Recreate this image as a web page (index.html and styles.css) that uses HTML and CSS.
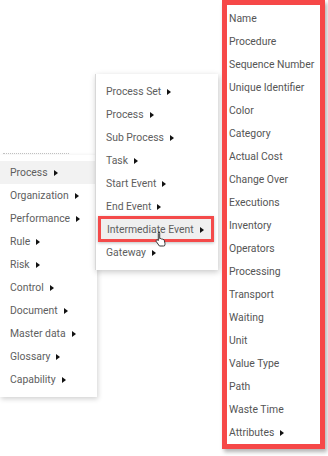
FILE: index.html
```html
<!DOCTYPE html>
<html>
<head>
<meta charset="utf-8">
<link rel="stylesheet" href="styles.css">
</head>
<body>
<div class="canvas">
  <div class="ghost-line"></div>

  <ul class="menu menu-left">
    <li class="item active">Process<span class="arr"></span></li>
    <li class="item">Organization<span class="arr"></span></li>
    <li class="item">Performance<span class="arr"></span></li>
    <li class="item">Rule<span class="arr"></span></li>
    <li class="item">Risk<span class="arr"></span></li>
    <li class="item">Control<span class="arr"></span></li>
    <li class="item">Document<span class="arr"></span></li>
    <li class="item">Master data<span class="arr"></span></li>
    <li class="item">Glossary<span class="arr"></span></li>
    <li class="item">Capability<span class="arr"></span></li>
  </ul>

  <ul class="menu menu-mid">
    <li class="item">Process Set<span class="arr"></span></li>
    <li class="item">Process<span class="arr"></span></li>
    <li class="item">Sub Process<span class="arr"></span></li>
    <li class="item">Task<span class="arr"></span></li>
    <li class="item">Start Event<span class="arr"></span></li>
    <li class="item">End Event<span class="arr"></span></li>
    <li class="item hover">Intermediate Event<span class="arr"></span></li>
    <li class="item">Gateway<span class="arr"></span></li>
  </ul>

  <svg class="cursor" width="12" height="16" viewBox="0 0 12 16">
    <path d="M3.5 1.2c.7 0 1.2.5 1.2 1.2v5.2l.3-.1c.6-.3 1.300 0 1.5.5.6-.3 1.3 0 1.5.6.6-.2 1.3.1 1.4.8l.6 3.3c.1.8-.1 1.6-.6 2.2L8.6 15H4.4L1.3 10.6c-.4-.6-.3-1.3.3-1.600.5-.3 1.1-.1 1.500.3l.2.3V2.4c0-.7.5-1.2 1.2-1.2z" fill="#fff" stroke="#222" stroke-width="0.9"/>
  </svg>

  <ul class="menu menu-right">
    <li class="item">Name</li>
    <li class="item">Procedure</li>
    <li class="item">Sequence Number</li>
    <li class="item">Unique Identifier</li>
    <li class="item">Color</li>
    <li class="item">Category</li>
    <li class="item">Actual Cost</li>
    <li class="item">Change Over</li>
    <li class="item">Executions</li>
    <li class="item">Inventory</li>
    <li class="item">Operators</li>
    <li class="item">Processing</li>
    <li class="item">Transport</li>
    <li class="item">Waiting</li>
    <li class="item">Unit</li>
    <li class="item">Value Type</li>
    <li class="item">Path</li>
    <li class="item">Waste Time</li>
    <li class="item">Attributes<span class="arr"></span></li>
  </ul>
</div>
</body>
</html>
```
FILE: styles.css
```css
html, body {
  margin: 0;
  padding: 0;
  background: #fff;
}
.canvas {
  position: relative;
  width: 328px;
  height: 456px;
  overflow: hidden;
  font-family: Roboto, "Liberation Sans", sans-serif;
  font-size: 10.4px;
  color: #5e5e5e;
}
.menu {
  list-style: none;
  margin: 0;
  padding: 0;
  background: #fff;
  position: absolute;
  box-sizing: border-box;
}
.item {
  height: 23px;
  line-height: 23px;
  white-space: nowrap;
  display: flex;
  align-items: center;
}
.arr {
  width: 0;
  height: 0;
  border-top: 3px solid transparent;
  border-bottom: 3px solid transparent;
  border-left: 4px solid #111;
  margin-left: 6px;
  margin-top: 1px;
}
.ghost-line {
  position: absolute;
  left: 3px;
  top: 153px;
  width: 66px;
  border-top: 1px dotted #c4c4c4;
}
.menu-left {
  left: 0;
  top: 155px;
  width: 97px;
  padding: 6px 0;
  box-shadow: 1px 2px 5px rgba(0,0,0,0.18);
}
.menu-left .item {
  padding-left: 10px;
}
.menu-left .active {
  background: #f2f2f2;
}
.menu-mid {
  left: 95px;
  top: 74px;
  width: 123px;
  padding: 6px 0;
  border-left: 1px solid #d8d8d8;
  box-shadow: 1px 2px 6px rgba(0,0,0,0.22);
}
.menu-mid .item {
  padding-left: 10px;
}
.menu-mid .hover {
  background: #efefef;
  margin: -2px 4px 0 2px;
  height: 26px;
  box-sizing: border-box;
  padding-left: 6px;
  border: 3px solid #f44a4a;
  box-shadow: 0 1px 3px rgba(0,0,0,0.25);
}
.menu-mid .hover + .item {
  margin-top: -1px;
}
.cursor {
  position: absolute;
  left: 155px;
  top: 231px;
}
.menu-right {
  left: 222px;
  top: 0;
  width: 103px;
  height: 449px;
  border: 5px solid #f64848;
  padding: 2px 0 0;
  box-shadow: 2px 3px 4px rgba(0,0,0,0.3);
}
.menu-right .item {
  padding-left: 2px;
  color: #555;
}
```
